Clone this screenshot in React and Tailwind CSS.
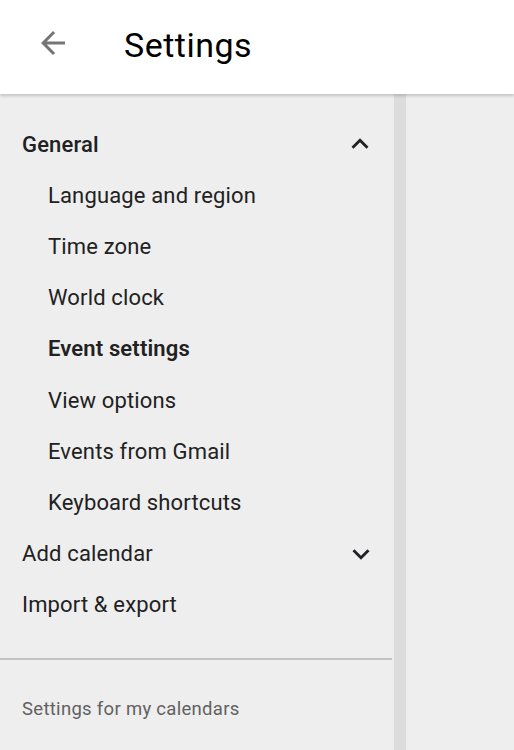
import React from 'react';

function ArrowBack() {
  return (
    <svg width="36" height="36" viewBox="0 0 24 24" fill="#757575">
      <path d="M20 11H7.83l5.59-5.59L12 4l-8 8 8 8 1.41-1.41L7.83 13H20v-2z" />
    </svg>
  );
}

function Chevron({ up }) {
  return (
    <svg width="34" height="34" viewBox="0 0 24 24" fill="#202124">
      {up ? (
        <path d="M12 8l-6 6 1.41 1.41L12 10.83l4.59 4.58L18 14z" />
      ) : (
        <path d="M16.59 8.59L12 13.17 7.41 8.59 6 10l6 6 6-6z" />
      )}
    </svg>
  );
}

const subItems = [
  { label: 'Language and region' },
  { label: 'Time zone' },
  { label: 'World clock' },
  { label: 'Event settings', active: true },
  { label: 'View options' },
  { label: 'Events from Gmail' },
  { label: 'Keyboard shortcuts' },
];

export default function App() {
  return (
    <div className="h-[750px] w-[514px] overflow-hidden bg-[#eeeeee] font-['Roboto',sans-serif] text-[#212121] flex flex-col">
      {/* top bar */}
      <div className="relative z-10 h-[94px] shrink-0 bg-white shadow-[0_2px_3px_rgba(0,0,0,0.18)] flex items-center">
        <div className="w-[106px] flex justify-center -mt-[8px]">
          <ArrowBack />
        </div>
        <h1 className="ml-[18px] text-[34px] tracking-[0.5px] leading-none text-black -mt-[5px]">Settings</h1>
      </div>

      <div className="flex flex-1">
        {/* sidebar */}
        <div className="w-[394px] pt-[24.5px] text-[22px] tracking-[0.15px]">
          <div className="h-[51.2px] flex items-center justify-between pl-[22px] pr-[17px]">
            <span className="font-medium">General</span>
            <Chevron up />
          </div>
          {subItems.map((item) => (
            <div key={item.label} className="h-[51.2px] flex items-center pl-[48px]">
              <span className={item.active ? 'font-semibold' : ''}>{item.label}</span>
            </div>
          ))}
          <div className="h-[51.2px] flex items-center justify-between pl-[22px] pr-[16px]">
            <span>Add calendar</span>
            <Chevron />
          </div>
          <div className="h-[51.2px] flex items-center pl-[22px]">
            <span>Import &amp; export</span>
          </div>
          <div className="mt-[28px] h-[2px] w-[392px] bg-[#c2c2c2]" />
          <div className="pl-[22px] pt-[36px] text-[18.5px] tracking-[0.3px] text-[#616161]">Settings for my calendars</div>
        </div>
        {/* scrollbar strip */}
        <div className="w-[12px] bg-[#dcdcdc]" />
        <div className="flex-1" />
      </div>
    </div>
  );
}
